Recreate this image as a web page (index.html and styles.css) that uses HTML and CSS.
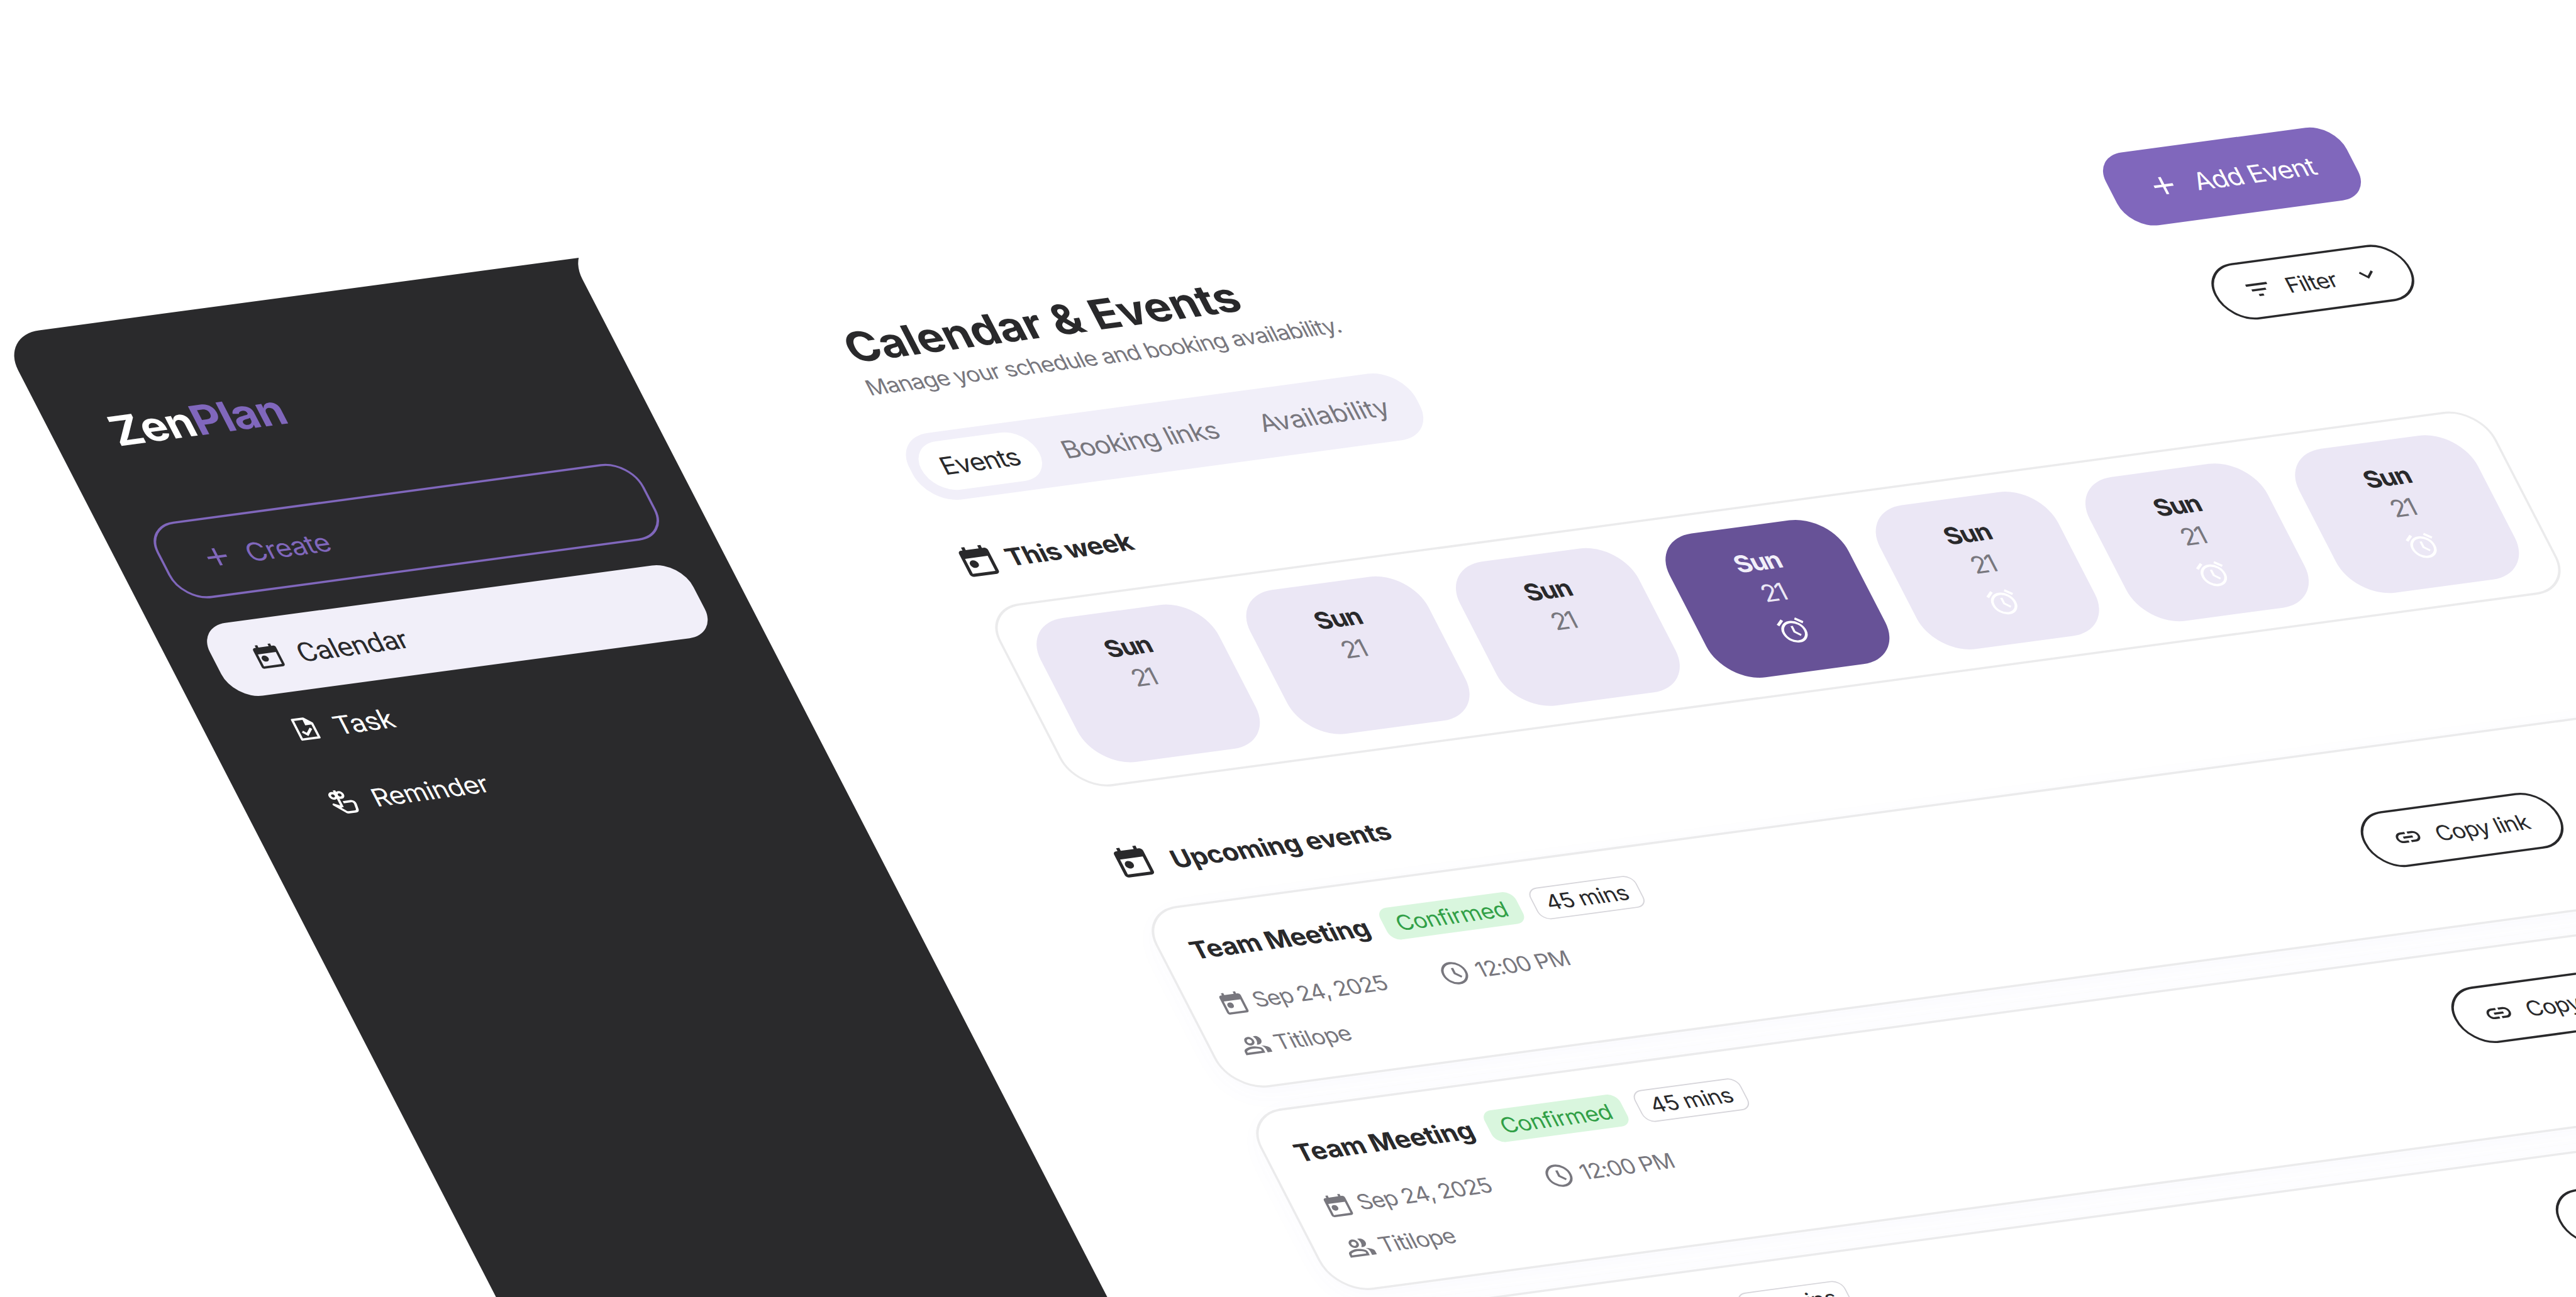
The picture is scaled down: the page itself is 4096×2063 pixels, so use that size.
FILE: index.html
```html
<!DOCTYPE html>
<html lang="en">
<head>
<meta charset="utf-8">
<title>ZenPlan – Calendar &amp; Events</title>
<link rel="stylesheet" href="styles.css">
</head>
<body>
<svg class="sprite" aria-hidden="true">
  <symbol id="i-plus" viewBox="0 0 24 24"><path d="M19 13h-6v6h-2v-6H5v-2h6V5h2v6h6z"/></symbol>
  <symbol id="i-calendar" viewBox="0 0 24 24"><path fill-rule="evenodd" d="M19 4h-1V2h-2v2H8V2H6v2H5a2 2 0 0 0-2 2v14a2 2 0 0 0 2 2h14a2 2 0 0 0 2-2V6a2 2 0 0 0-2-2zm0 16H5V9.6h14z"/><circle cx="8.8" cy="13.8" r="2.6"/></symbol>
  <symbol id="i-task" viewBox="0 0 24 24"><path fill="none" stroke="currentColor" stroke-width="2" stroke-linejoin="round" d="M4.9 2.9H14l5.1 5.1v13.1H4.9z"/><path d="M13 2.5V9h6.5z"/><path fill="none" stroke="currentColor" stroke-width="2.1" d="M8.2 14.2l3 3 5-5"/></symbol>
  <symbol id="i-hand" viewBox="0 0 24 24"><g fill="none" stroke="currentColor" stroke-width="2.1" stroke-linejoin="round"><circle cx="6.2" cy="6" r="2.5"/><circle cx="11.8" cy="6" r="2.5"/><path d="M9.1 1.4V17M8.7 16.800l-5.300-3 6.900 7.600c.5.5 1.100.8 1.900.8h5.300c1.300 0 2.200-.8 2.400-2l.6-4.600c.2-1.500-.7-2.900-2.300-2.900H11.700"/></g></symbol>
  <symbol id="i-filter" viewBox="0 0 24 24"><path d="M10 18h4v-2h-4zM3 6v2h18V6zm3 7h12v-2H6z"/></symbol>
  <symbol id="i-chevron" viewBox="0 0 24 24"><path fill="none" stroke="currentColor" stroke-width="1.9" d="M6.700 9.400 12 14.700l5.300-5.300"/></symbol>
  <symbol id="i-alarm" viewBox="0 0 24 24"><path d="M22 5.720l-4.600-3.860-1.290 1.530 4.600 3.860zM7.880 3.390L6.600 1.860 2 5.710l1.290 1.530z"/><g fill="none" stroke="currentColor" stroke-width="1.9"><circle cx="12" cy="13" r="8.050"/><path stroke-width="1.700" d="M12 8.300V13l3.500 3.300"/></g></symbol>
  <symbol id="i-clock" viewBox="0 0 24 24"><g fill="none" stroke="currentColor" stroke-width="1.9"><circle cx="12" cy="12" r="9.050"/><path d="M12 7.300v4.900l4.100 3.700"/></g></symbol>
  <symbol id="i-people" viewBox="0 0 24 24"><path d="M1 20v-2.800q0-.85.438-1.562T2.600 14.550q1.550-.775 3.150-1.162T9 13t3.250.388 3.150 1.162q.725.375 1.163 1.088T17 17.200V20zm18 0v-3q0-1.100-.612-2.113T16.650 13.150q1.275.15 2.400.513t2.100.887q.9.500 1.375 1.112T23 17v3zM9 12q-1.650 0-2.825-1.175T5 8t1.175-2.825T9 4t2.825 1.175T13 8t-1.175 2.825T9 12m10-4q0 1.650-1.175 2.825T15 12q-.275 0-.7-.062t-.7-.138q.675-.8 1.038-1.775T15 8t-.362-2.025T13.600 4.200q.35-.125.7-.163T15 4q1.650 0 2.825 1.175T19 8M3 18h12v-.8q0-.275-.137-.5t-.363-.35q-1.350-.675-2.725-1.012T9 15t-2.775.338T3.500 16.350q-.225.125-.363.350T3 17.200zm6-8q.825 0 1.413-.587T11 8t-.587-1.412T9 6t-1.412.588T7 8t.588 1.413T9 10"/></symbol>
  <symbol id="i-link" viewBox="0 0 24 24"><path d="M3.900 12c0-1.710 1.390-3.100 3.100-3.100h4V7H7c-2.760 0-5 2.240-5 5s2.240 5 5 5h4v-1.900H7c-1.710 0-3.100-1.390-3.100-3.100zM8 13h8v-2H8v2zm9-6h-4v1.900h4c1.710 0 3.100 1.390 3.100 3.100s-1.390 3.100-3.100 3.100h-4V17h4c2.760 0 5-2.240 5-5s-2.240-5-5-5z"/></symbol>
</svg>

<div class="board">
  <aside class="sidebar">
    <div class="logo"><span>Zen</span><span class="logo-accent">Plan</span></div>
    <button class="nav-item create"><svg class="icon i56"><use href="#i-plus"/></svg><span class="nav-label">Create</span></button>
    <nav class="nav">
      <a class="nav-item active"><svg class="icon i56 i53"><use href="#i-calendar"/></svg><span class="nav-label roboto">Calendar</span></a>
      <a class="nav-item"><svg class="icon i56 i50"><use href="#i-task"/></svg><span class="nav-label roboto task">Task</span></a>
      <a class="nav-item"><svg class="icon i56 i50"><use href="#i-hand"/></svg><span class="nav-label reminder">Reminder</span></a>
    </nav>
  </aside>

  <main class="main">
    <header class="header">
      <div>
        <h1 class="title">Calendar &amp; Events</h1>
        <p class="subtitle">Manage your schedule and booking availability.</p>
      </div>
      <button class="add"><svg class="icon i56"><use href="#i-plus"/></svg><span>Add Event</span></button>
    </header>

    <div class="toolbar">
      <div class="tabs">
        <span class="tab tab-events">Events</span>
        <span class="tab tab-links">Booking links</span>
        <span class="tab tab-avail">Availability</span>
      </div>
      <button class="pill filter"><svg class="icon i48"><use href="#i-filter"/></svg><span>Filter</span><svg class="icon i48 chevron"><use href="#i-chevron"/></svg></button>
    </div>

    <h2 class="section week-head"><svg class="icon i67"><use href="#i-calendar"/></svg><span>This week</span></h2>
    <div class="week">
      <div class="day"><b>Sun</b><span>21</span></div>
      <div class="day"><b>Sun</b><span>21</span></div>
      <div class="day"><b>Sun</b><span>21</span></div>
      <div class="day today"><b>Sun</b><span>21</span><svg class="icon alarm"><use href="#i-alarm"/></svg></div>
      <div class="day"><b>Sun</b><span>21</span><svg class="icon alarm"><use href="#i-alarm"/></svg></div>
      <div class="day"><b>Sun</b><span>21</span><svg class="icon alarm"><use href="#i-alarm"/></svg></div>
      <div class="day"><b>Sun</b><span>21</span><svg class="icon alarm"><use href="#i-alarm"/></svg></div>
    </div>

    <h2 class="section upcoming-head"><svg class="icon i67"><use href="#i-calendar"/></svg><span>Upcoming events</span></h2>
    <div class="events">
      <article class="event">
        <div class="event-body">
          <div class="event-top"><h3>Team Meeting</h3><span class="badge ok">Confirmed</span><span class="badge time">45 mins</span></div>
          <div class="meta"><span class="meta-item date"><svg class="icon i49"><use href="#i-calendar"/></svg>Sep 24, 2025</span><span class="meta-item hour"><svg class="icon i51"><use href="#i-clock"/></svg>12:00 PM</span></div>
          <div class="meta people"><span class="meta-item"><svg class="icon i49"><use href="#i-people"/></svg>Titilope</span></div>
        </div>
        <button class="pill copy"><svg class="icon i48"><use href="#i-link"/></svg><span>Copy link</span></button>
      </article>
      <article class="event raised">
        <div class="event-body">
          <div class="event-top"><h3>Team Meeting</h3><span class="badge ok">Confirmed</span><span class="badge time">45 mins</span></div>
          <div class="meta"><span class="meta-item date"><svg class="icon i49"><use href="#i-calendar"/></svg>Sep 24, 2025</span><span class="meta-item hour"><svg class="icon i51"><use href="#i-clock"/></svg>12:00 PM</span></div>
          <div class="meta people"><span class="meta-item"><svg class="icon i49"><use href="#i-people"/></svg>Titilope</span></div>
        </div>
        <button class="pill copy"><svg class="icon i48"><use href="#i-link"/></svg><span>Copy link</span></button>
      </article>
      <article class="event raised">
        <div class="event-body">
          <div class="event-top"><h3>Team Meeting</h3><span class="badge ok">Confirmed</span><span class="badge time">45 mins</span></div>
          <div class="meta"><span class="meta-item date"><svg class="icon i49"><use href="#i-calendar"/></svg>Sep 24, 2025</span><span class="meta-item hour"><svg class="icon i51"><use href="#i-clock"/></svg>12:00 PM</span></div>
          <div class="meta people"><span class="meta-item"><svg class="icon i49"><use href="#i-people"/></svg>Titilope</span></div>
        </div>
        <button class="pill copy"><svg class="icon i48"><use href="#i-link"/></svg><span>Copy link</span></button>
      </article>
    </div>
  </main>
</div>
</body>
</html>
```
FILE: styles.css
```css
* { box-sizing: border-box; }

:root {
  --ink: #29292b;
  --muted: #78777e;
  --line: #ebebec;
  --violet: #8067bc;
  --violet-deep: #675297;
  --violet-soft: #ebe7f5;
  --violet-mist: #f1eff9;
}

html, body { height: 100%; }

body {
  margin: 0;
  overflow: hidden;
  background: #fff;
  color: var(--ink);
  font-family: Inter, "Liberation Sans", sans-serif;
}

h1, h2, h3, p { margin: 0; }

button {
  font: inherit;
  color: inherit;
  background: none;
  border: 0;
  padding: 0;
}

.sprite { display: block; width: 0; height: 0; }

.icon { display: block; flex: none; fill: currentColor; }
.i67 { width: 67px; height: 67px; }
.i56 { width: 56px; height: 56px; }
.i53 { padding: 1.5px; }
.i50 { padding: 3.2px; }
.i51 { width: 51px; height: 51px; }
.i49 { width: 49px; height: 49px; }
.i48 { width: 48.5px; height: 48.5px; }

/* The app is laid out flat, then tilted as one sheet */
.board {
  display: flex;
  align-items: flex-start;
  width: 4400px;
  transform-origin: 0 0;
  transform: matrix(0.92091, -0.12389, 0.42577, 0.82598, 0.33, 533.7);
}

/* Sidebar */
.sidebar {
  flex: none;
  width: 1062px;
  height: 2900px;
  margin-right: -75px;
  padding: 150.4px 152px 0 75px;
  border-radius: 67px 0 0 0;
  background: #2a2a2c;
}

.logo {
  margin-left: 25px;
  color: #fff;
  font-size: 76px;
  font-weight: 700;
  line-height: 100px;
  letter-spacing: -1.3px;
}
.logo-accent { color: var(--violet); }

.nav-item {
  display: flex;
  align-items: center;
  gap: 22.5px;
  height: 139.7px;
  padding-left: 62.5px;
  border-radius: 49px;
  color: #fff;
}
.create {
  width: 842px;
  height: 146.5px;
  margin: 127px -3.5px 48.6px;
  border: 4px solid var(--violet);
  border-radius: 52px;
  color: var(--violet);
}
.active { background: var(--violet-mist); color: var(--ink); }

.nav-label { font-size: 47px; line-height: 56px; letter-spacing: -0.95px; padding-top: 1px; }
.nav-label.roboto { font-family: Roboto, sans-serif; font-size: 49px; letter-spacing: -0.9px; padding-top: 6px; }
.nav-label.task { font-size: 48px; letter-spacing: -0.7px; }
.nav-label.reminder { font-size: 45.5px; letter-spacing: -0.83px; padding-top: 5px; }

/* Main panel */
.main {
  flex: none;
  width: 3400px;
  height: 3000px;
  margin-top: -31px;
  padding: 209.7px 443px 0 371px;
  border-radius: 70px 0 0 0;
  background: #fff;
}

.header { display: flex; justify-content: space-between; align-items: flex-start; }
.title { font-size: 76.5px; font-weight: 700; line-height: 98px; letter-spacing: -0.35px; margin-left: -2.5px; }
.subtitle { margin-top: 2.4px; font-size: 39px; line-height: 52px; letter-spacing: -1.25px; margin-left: -3px; color: var(--muted); }

.add {
  display: flex;
  align-items: center;
  gap: 24px;
  width: 416.5px;
  height: 140px;
  margin-top: 5.8px;
  padding-left: 62.8px;
  border-radius: 49px;
  background: var(--violet);
  color: #fff;
  font-size: 45px;
  letter-spacing: -1.2px;
}

.toolbar {
  display: flex;
  justify-content: space-between;
  align-items: center;
  margin: 68.9px -4px 0 0;
}
.tabs {
  display: flex;
  gap: 7px;
  width: 876px;
  height: 128px;
  padding: 17.5px;
  border-radius: 58px;
  background: var(--violet-mist);
  color: var(--muted);
  font-size: 45px;
  letter-spacing: -1.2px;
}
.tab { display: flex; align-items: center; justify-content: center; height: 93px; border-radius: 46.5px; }
.tab-events { width: 204.6px; padding-right: 2px; background: #fff; color: var(--ink); letter-spacing: -1.5px; }
.tab-links { width: 333px; }
.tab-avail { width: 287px; letter-spacing: -0.4px; }

.pill {
  display: flex;
  align-items: center;
  gap: 24px;
  flex: none;
  width: 339px;
  height: 107.5px;
  padding-left: 47.5px;
  border: 4px solid var(--ink);
  border-radius: 54px;
  font-size: 39px;
  letter-spacing: -1.12px;
}
.filter .chevron { margin: -2px 0 0 5px; }

.section { display: flex; align-items: center; height: 67px; font-size: 45px; font-weight: 700; line-height: 50px; }
.week-head { margin-top: 80.7px; gap: 15px; letter-spacing: -0.95px; }
.week-head span { margin-top: 3px; }
.upcoming-head { margin-top: 107px; gap: 30px; letter-spacing: -0.55px; }
.upcoming-head span { margin-top: 14px; }

/* Week strip */
.week {
  display: flex;
  gap: 53.8px;
  height: 351.5px;
  margin-top: 53.8px;
  padding: 33px 47.5px;
  border: 4px solid var(--line);
  border-radius: 64px;
}
.day {
  display: flex;
  flex-direction: column;
  align-items: center;
  flex: none;
  width: 308.5px;
  height: 277px;
  padding: 39px 4px 0 0;
  border-radius: 70px;
  background: var(--violet-soft);
  line-height: 56px;
}
.day b { font-size: 43.5px; font-weight: 700; letter-spacing: -1.7px; }
.day span { margin-top: 3px; font-size: 44px; letter-spacing: -2.9px; color: var(--muted); }
.day.today { background: var(--violet-deep); color: var(--violet-mist); }
.day.today span { color: var(--violet-soft); }
.alarm { width: 55.2px; height: 55.2px; margin: 18px 0 0 3px; color: #fff; }

/* Event cards */
.events { display: flex; flex-direction: column; gap: 41px; margin-top: 57px; }
.event {
  display: flex;
  justify-content: space-between;
  align-items: flex-start;
  height: 349px;
  padding: 50px 207px 0 48.5px;
  border: 4px solid var(--line);
  border-radius: 66px;
  background: #fff;
  box-shadow: 0 12px 44px rgba(110, 100, 230, 0.03);
}
.event-top { display: flex; align-items: center; height: 61px; }
.event-top h3 { width: 332px; font-size: 45px; font-weight: 700; letter-spacing: -0.55px; white-space: nowrap; }
.badge { display: flex; align-items: center; justify-content: center; height: 60.5px; border-radius: 18px; }
.ok { width: 235.3px; background: #d9f6de; color: #31a047; font-size: 39px; letter-spacing: -0.56px; }
.time { width: 184px; margin-left: 24px; border: 2px solid #d6d5da; font-size: 38.5px; letter-spacing: -0.8px; }

.meta { display: flex; height: 50px; margin-top: 48.5px; color: var(--muted); font-size: 38.5px; letter-spacing: -1.29px; }
.meta.people { margin-top: 31px; font-size: 39px; letter-spacing: -0.91px; }
.meta-item { display: flex; align-items: center; gap: 10.5px; white-space: nowrap; }
.date { width: 381.5px; }
.hour { gap: 12px; letter-spacing: -1.25px; }

.copy { margin-top: 67px; font-size: 38.5px; letter-spacing: -1.1px; }
.raised .copy { margin-top: 15.5px; }
```
